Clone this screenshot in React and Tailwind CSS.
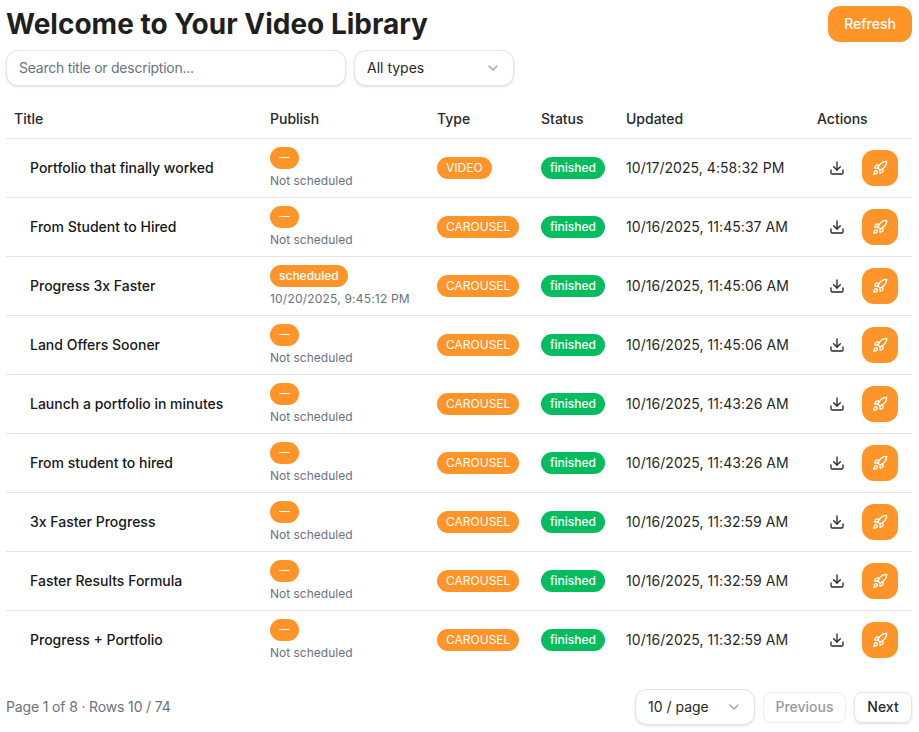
import React from 'react';
import { ChevronDown, Download, Rocket } from 'lucide-react';

const rows = [
  { title: 'Portfolio that finally worked', type: 'VIDEO', updated: '10/17/2025, 4:58:32 PM' },
  { title: 'From Student to Hired', type: 'CAROUSEL', updated: '10/16/2025, 11:45:37 AM' },
  { title: 'Progress 3x Faster', type: 'CAROUSEL', updated: '10/16/2025, 11:45:06 AM', publish: 'scheduled', when: '10/20/2025, 9:45:12 PM' },
  { title: 'Land Offers Sooner', type: 'CAROUSEL', updated: '10/16/2025, 11:45:06 AM' },
  { title: 'Launch a portfolio in minutes', type: 'CAROUSEL', updated: '10/16/2025, 11:43:26 AM' },
  { title: 'From student to hired', type: 'CAROUSEL', updated: '10/16/2025, 11:43:26 AM' },
  { title: '3x Faster Progress', type: 'CAROUSEL', updated: '10/16/2025, 11:32:59 AM' },
  { title: 'Faster Results Formula', type: 'CAROUSEL', updated: '10/16/2025, 11:32:59 AM' },
  { title: 'Progress + Portfolio', type: 'CAROUSEL', updated: '10/16/2025, 11:32:59 AM' },
];

function Pill({ color = 'bg-[#ff9429]', weight = 'font-medium', children }) {
  return (
    <div className={`flex h-[22px] items-center rounded-full px-[9px] text-xs text-white ${weight} ${color}`}>
      {children}
    </div>
  );
}

function Row({ row, last }) {
  return (
    <tr className={`h-[59px] ${last ? '' : 'border-b border-[#e3e4ea]'}`}>
      <td className="pl-6 pr-2 text-sm font-medium text-[#17171a]">{row.title}</td>
      <td className="px-2">
        <div className="flex flex-col items-start gap-1">
          <Pill>{row.publish || <span className="w-[11px] text-center text-[10px] font-semibold">—</span>}</Pill>
          <span className={`text-xs leading-4 text-[#6b7280] ${row.when ? 'tracking-[0.2px]' : ''}`}>{row.when || 'Not scheduled'}</span>
        </div>
      </td>
      <td className="px-2">
        <div className="flex">
          <Pill weight="font-normal">{row.type}</Pill>
        </div>
      </td>
      <td className="px-2">
        <div className="flex">
          <Pill color="bg-[#05bd5e]">finished</Pill>
        </div>
      </td>
      <td className="px-2 text-sm tracking-[0.05px] whitespace-nowrap text-[#27272a]">{row.updated}</td>
      <td className="pl-2">
        <div className="flex items-center justify-end gap-[17px] pr-3.5">
          <Download size={16} strokeWidth={2} className="text-[#27272a]" />
          <button className="flex h-9 w-9 items-center justify-center rounded-xl bg-[#ff9429] text-white">
            <Rocket size={16} strokeWidth={2} />
          </button>
        </div>
      </td>
    </tr>
  );
}

export default function App() {
  return (
    <div className="h-[732px] w-[919px] bg-white px-1.5 pt-1.5 font-['Inter',sans-serif] text-[#27272a]">
      <div className="flex items-start justify-between pr-px">
        <h1 className="text-[28px] leading-9 font-bold text-[#1f1f22]">Welcome to Your Video Library</h1>
        <button className="h-9 w-[84px] rounded-xl bg-[#ff9429] text-sm font-medium text-white">Refresh</button>
      </div>

      {/* Filtros */}
      <div className="mt-2 flex gap-2">
        <input
          placeholder="Search title or description..."
          className="h-9 w-[340px] rounded-xl border border-[#e3e4ea] bg-white px-3 pb-0.5 text-sm tracking-[-0.25px] shadow-sm outline-none placeholder:text-[#6b7280]"
        />
        <div className="flex h-9 w-40 items-center justify-between rounded-xl border border-[#e3e4ea] bg-white px-3 text-sm shadow-sm">
          All types
          <ChevronDown size={16} className="text-[#a1a1aa]" />
        </div>
      </div>

      <table className="mt-3.5 w-[906px] table-fixed border-collapse text-left">
        <colgroup>
          <col className="w-[256px]" />
          <col className="w-[167px]" />
          <col className="w-[104px]" />
          <col className="w-[85px]" />
          <col className="w-[191px]" />
          <col className="w-[103px]" />
        </colgroup>
        <thead>
          <tr className="h-[38px] border-b border-[#e3e4ea] text-sm">
            <th className="px-2 font-medium">Title</th>
            <th className="px-2 font-medium">Publish</th>
            <th className="px-2 font-medium">Type</th>
            <th className="px-2 font-medium">Status</th>
            <th className="px-2 font-medium">Updated</th>
            <th className="px-2 font-medium">Actions</th>
          </tr>
        </thead>
        <tbody>
          {rows.map((row, index) => (
            <Row key={index} row={row} last={index === rows.length - 1} />
          ))}
        </tbody>
      </table>

      {/* Paginação */}
      <div className="mt-5 flex items-center justify-between pr-px">
        <span className="text-sm tracking-[-0.15px] text-[#6b7280]">Page 1 of 8 · Rows 10 / 74</span>
        <div className="flex items-center gap-2">
          <div className="flex h-9 w-[120px] items-center justify-between rounded-xl border border-[#e3e4ea] bg-white px-3 text-sm shadow-sm">
            10 / page
            <ChevronDown size={16} className="text-[#a1a1aa]" />
          </div>
          <button className="h-[31px] w-[83px] rounded-lg border border-[#eeeef2] text-sm font-medium text-[#9a9a9f]">Previous</button>
          <button className="h-[31px] w-[58px] rounded-lg border border-[#e3e4ea] text-sm font-medium shadow-sm">Next</button>
        </div>
      </div>
    </div>
  );
}
